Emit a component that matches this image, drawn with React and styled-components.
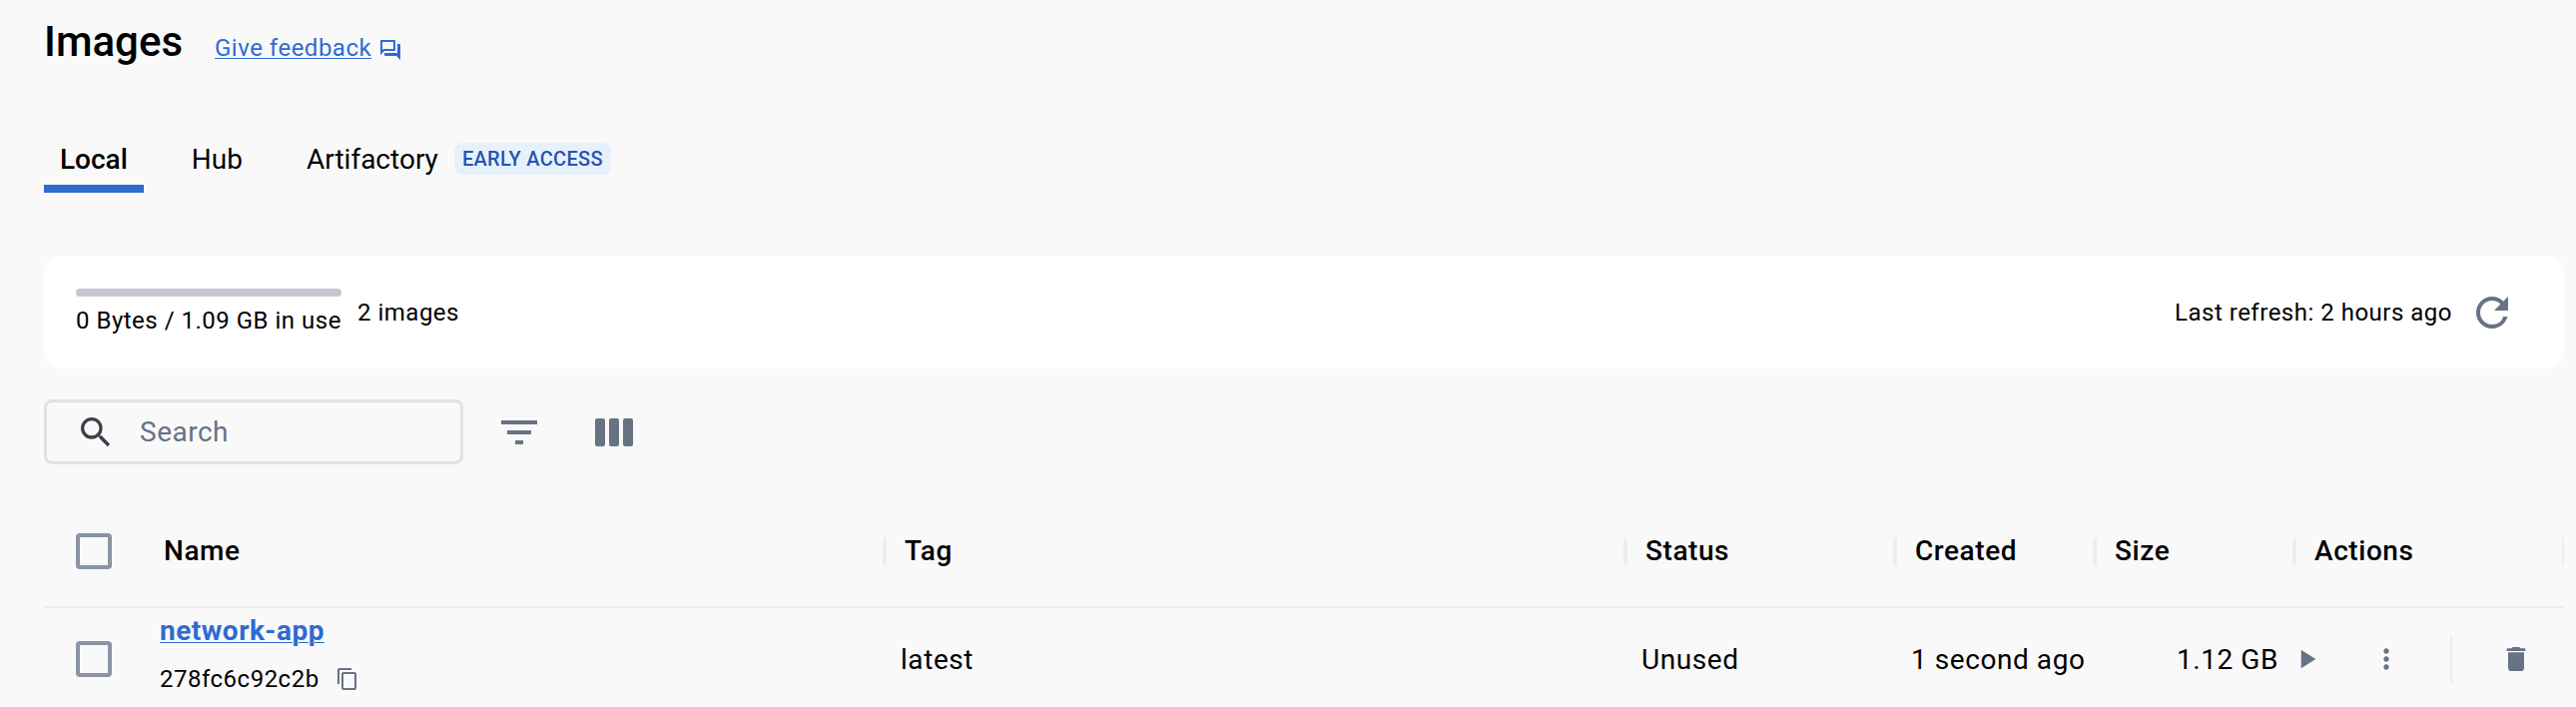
import React from "react";
import styled, { createGlobalStyle } from "styled-components";
import {
  MdOutlineQuestionAnswer,
  MdSearch,
  MdFilterList,
  MdRefresh,
  MdContentCopy,
  MdMoreVert,
  MdDelete,
  MdPlayArrow,
} from "react-icons/md";

const GlobalStyle = createGlobalStyle`
  * { box-sizing: border-box; }
  body {
    margin: 0;
    background: #f9f9fa;
    color: #000;
    font-family: Roboto, sans-serif;
    font-size: 28px;
    letter-spacing: 0.56px;
  }
  svg { display: block; flex: none; }
`;

const Page = styled.main`
  width: 2580px;
  height: 708px;
  overflow: hidden;
  padding: 0 12px 0 44px;
`;

const Header = styled.header`
  height: 84px;
  display: flex;
  align-items: baseline;
  line-height: 84px;
`;

const Title = styled.h1`
  margin: 0;
  width: 171px;
  font-size: 42px;
  font-weight: 500;
  letter-spacing: 0;
`;

const FeedbackLink = styled.a`
  display: flex;
  align-items: center;
  gap: 7px;
  color: #2f6bd0;
  font-size: 24px;
  letter-spacing: 0.5px;

  span {
    text-decoration: underline;
    text-decoration-thickness: 1px;
    text-underline-offset: 2px;
  }
  svg { margin-top: 3px; }
`;

const Tabs = styled.nav`
  display: flex;
  margin-top: 41px;
  height: 68px;
`;

const Tab = styled.button`
  display: flex;
  align-items: center;
  gap: 16px;
  height: 68px;
  margin-right: ${(p) => p.$gap || 0}px;
  padding: 10px 16px 0;
  border: 0;
  border-bottom: 8px solid ${(p) => (p.$active ? "#2f6bd0" : "transparent")};
  background: none;
  color: #000;
  font: ${(p) => (p.$active ? 500 : 400)} 28px/50px Roboto, sans-serif;
  letter-spacing: 0;
`;

const Badge = styled.span`
  height: 32px;
  margin-bottom: 2px;
  padding: 0 8px;
  border-radius: 8px;
  background: #e7f1fb;
  color: #2354b5;
  font-size: 20px;
  font-weight: 500;
  line-height: 32px;
  letter-spacing: 0.3px;
`;

const UsageCard = styled.section`
  display: flex;
  align-items: center;
  height: 112px;
  margin-top: 64px;
  padding: 0 48px 0 32px;
  border-radius: 16px;
  background: #fff;
  font-size: 24px;
  line-height: 36px;
  letter-spacing: 0.5px;
`;

const Usage = styled.div`
  width: 266px;
  margin-right: 16px;
  padding-top: 2px;
  white-space: nowrap;
`;

const UsageBar = styled.div`
  height: 8px;
  margin-bottom: 6px;
  border-radius: 4px;
  background: #c4c7d1;
`;

const LastRefresh = styled.div`
  display: flex;
  align-items: center;
  gap: 16px;
  margin-left: auto;
  svg { color: #677285; }
`;

const Toolbar = styled.div`
  display: flex;
  align-items: center;
  margin-top: 31px;
  color: #677285;
`;

const SearchBox = styled.label`
  display: flex;
  align-items: center;
  width: 420px;
  height: 65px;
  padding-left: 29px;
  border: 3px solid #e1e2e6;
  border-radius: 8px;
  svg { color: #393f49; }
`;

const SearchInput = styled.input`
  width: 260px;
  margin-left: 24px;
  padding: 0;
  border: 0;
  outline: 0;
  background: none;
  font: 400 28px/40px Roboto, sans-serif;
  letter-spacing: 0.5px;
  &::placeholder { color: #677285; opacity: 1; }
`;

const ToolButton = styled.button`
  display: flex;
  margin-left: ${(p) => p.$gap}px;
  padding: 0;
  border: 0;
  background: none;
  color: inherit;
`;

const Table = styled.div`
  margin-top: 32px;
`;

const Row = styled.div`
  display: grid;
  grid-template-columns: 112px 732px 742px 270px 200px 200px 268px;
  grid-template-rows: 100%;
  align-items: center;
  height: ${(p) => p.$height}px;
`;

const HeadRow = styled(Row)`
  border-bottom: 2px solid #eeeef0;
  font-weight: 500;
`;

const HeadCell = styled.div`
  display: flex;
  align-items: center;
  height: 28px;
  padding-bottom: 2px;
  padding-left: ${(p) => p.$inset ?? 18}px;
  border-right: ${(p) => p.$rule ?? 4}px solid #eeeef0;
`;

const Cell = styled.div`
  padding-left: 14px;
  text-align: ${(p) => p.$align || "left"};
  padding-right: ${(p) => p.$end || 0}px;
  white-space: nowrap;
`;

const Checkbox = styled.div`
  width: 36px;
  height: 36px;
  margin-left: 32px;
  border: 4px solid #8b93a5;
  border-radius: 4px;
`;

const NameCell = styled.div`
  display: flex;
  flex-direction: column;
  padding: 0 0 8px 4px;
`;

const ImageLink = styled.a`
  height: 48px;
  color: #2f6bd0;
  font-weight: 700;
  line-height: 48px;
  letter-spacing: 0.5px;
  text-decoration: underline;
  text-decoration-thickness: 1px;
  text-underline-offset: 2px;
`;

const ImageId = styled.div`
  display: flex;
  align-items: center;
  gap: 16px;
  height: 48px;
  font-size: 24px;
  letter-spacing: 0.5px;
  svg { color: #677285; }
`;

const Actions = styled.div`
  display: flex;
  align-items: center;
  color: #677285;
`;

const ActionButton = styled.button`
  display: flex;
  margin-left: ${(p) => p.$gap}px;
  padding: 0;
  border: 0;
  background: none;
  color: inherit;
`;

const Divider = styled.div`
  width: 2px;
  height: 48px;
  margin-left: 48px;
  background: #eeeef0;
`;

const ColumnsIcon = () => (
  <svg width="38" height="28" viewBox="0 0 38 28" fill="currentColor">
    <rect x="0" width="10" height="28" rx="2" />
    <rect x="14" width="10" height="28" rx="2" />
    <rect x="28" width="10" height="28" rx="2" />
  </svg>
);

export default function App() {
  return (
    <Page>
      <GlobalStyle />
      <Header>
        <Title>Images</Title>
        <FeedbackLink>
          <span>Give feedback</span>
          <MdOutlineQuestionAnswer size={24} />
        </FeedbackLink>
      </Header>
      <Tabs>
        <Tab $active $gap={32}>Local</Tab>
        <Tab $gap={32}>Hub</Tab>
        <Tab>
          Artifactory <Badge>EARLY ACCESS</Badge>
        </Tab>
      </Tabs>
      <UsageCard>
        <Usage>
          <UsageBar />
          0 Bytes / 1.09 GB in use
        </Usage>
        <span>2 images</span>
        <LastRefresh>
          Last refresh: 2 hours ago
          <MdRefresh size={48} />
        </LastRefresh>
      </UsageCard>
      <Toolbar>
        <SearchBox>
          <MdSearch size={40} />
          <SearchInput placeholder="Search" />
        </SearchBox>
        <ToolButton $gap={32}>
          <MdFilterList size={48} />
        </ToolButton>
        <ToolButton $gap={52}>
          <ColumnsIcon />
        </ToolButton>
      </Toolbar>
      <Table>
        <HeadRow $height={112}>
          <Checkbox />
          <HeadCell $inset={8}>Name</HeadCell>
          <HeadCell>Tag</HeadCell>
          <HeadCell>Status</HeadCell>
          <HeadCell>Created</HeadCell>
          <HeadCell>Size</HeadCell>
          <HeadCell $rule={2}>Actions</HeadCell>
        </HeadRow>
        <Row $height={102}>
          <Checkbox />
          <NameCell>
            <ImageLink>network-app</ImageLink>
            <ImageId>
              278fc6c92c2b
              <MdContentCopy size={24} />
            </ImageId>
          </NameCell>
          <Cell>latest</Cell>
          <Cell>Unused</Cell>
          <Cell>1 second ago</Cell>
          <Cell $align="right" $end={18}>1.12 GB</Cell>
          <Actions>
            <ActionButton $gap={-6}>
              <MdPlayArrow size={32} />
            </ActionButton>
            <ActionButton $gap={48}>
              <MdMoreVert size={32} />
            </ActionButton>
            <Divider />
            <ActionButton $gap={48}>
              <MdDelete size={32} />
            </ActionButton>
          </Actions>
        </Row>
      </Table>
    </Page>
  );
}
